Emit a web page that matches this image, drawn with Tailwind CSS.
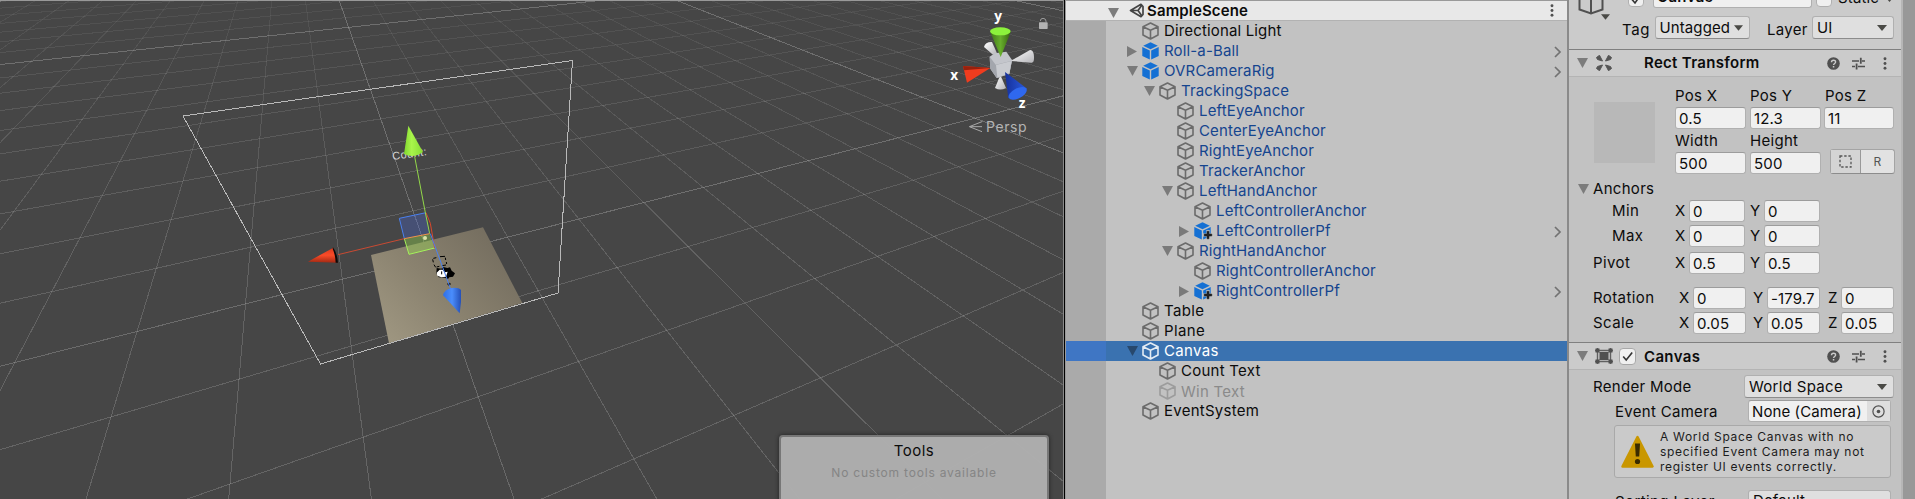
<!DOCTYPE html>
<html lang="en">
<head>
<meta charset="utf-8">
<title>Scene editor</title>
<script src="https://cdn.jsdelivr.net/npm/@tailwindcss/browser@4"></script>
</head>
<body class="w-[1915px] h-[499px] overflow-hidden bg-[#c2c2c2] font-[Inter,sans-serif] text-[15px] leading-5 tracking-[0.15px] text-[#0c0c0c]">
<svg class="hidden">
  <defs>
    <symbol id="cube" viewBox="0 0 17 18"><path d="M8.5 1 16 4.8v8.2L8.5 17 1 13V4.800zM1 4.800 8.500 8.300 16 4.800M8.500 8.300V17" fill="none" stroke="currentColor" stroke-width="1.6" stroke-linejoin="round"/></symbol>
    <symbol id="prefab" viewBox="0 0 17 18"><path d="M8.500 .3 15.800 3.700 8.500 7.300 1.200 3.700zM.3 5 7.800 8.600v9L.3 13.900zM16.700 5 9.200 8.600v9l7.500-3.700z" fill="#1470d4"/></symbol>
    <symbol id="plus" viewBox="0 0 10 10"><path d="M3.400 0h3.200v3.400H10v3.200H6.600V10H3.400V6.600H0V3.400h3.400z" fill="#c2c2c2"/><path d="M4 1.200h2V4h2.800v2H6v2.800H4V6H1.200V4H4z" fill="#222" stroke="#222" stroke-width=".5"/></symbol>
    <symbol id="down" viewBox="0 0 11 10"><path d="M0 0h11L5.500 10z" fill="currentColor"/></symbol>
    <symbol id="right" viewBox="0 0 10 11"><path d="M0 0v11l10-5.500z" fill="currentColor"/></symbol>
    <symbol id="chev" viewBox="0 0 8 12"><path d="M1 1l5 5-5 5" fill="none" stroke="#727272" stroke-width="1.700"/></symbol>
    <symbol id="caret" viewBox="0 0 10 6"><path d="M0 0h10L5 6z" fill="#4a4a46"/></symbol>
    <symbol id="dots" viewBox="0 0 4 13"><g fill="#505050"><circle cx="2" cy="1.700" r="1.450"/><circle cx="2" cy="6.500" r="1.450"/><circle cx="2" cy="11.300" r="1.450"/></g></symbol>
    <symbol id="help" viewBox="0 0 13 13"><circle cx="6.500" cy="6.500" r="6.300" fill="#505050"/><path d="M4.500 5.200c0-2.700 4.100-2.600 4.100-.2 0 1.500-2 1.500-2 3" fill="none" stroke="#cbcbcb" stroke-width="1.400"/><rect x="5.800" y="9" width="1.500" height="1.500" fill="#cbcbcb"/></symbol>
    <symbol id="sliders" viewBox="0 0 13 13"><path d="M0 4h7M10 4h3M0 9.500h3M6 9.500h7" stroke="#505050" stroke-width="1.600"/><path d="M8.800 .8v6M4.600 6.500v6" stroke="#505050" stroke-width="1.800"/></symbol>
  </defs>
</svg>

<div class="flex h-[499px]">

  <!-- Scene view -->
  <section class="relative w-[1063px] h-full shrink-0 bg-[#464646] overflow-hidden border-t border-[#999]">
    <svg class="block -mt-px" width="1063" height="499" viewBox="0 0 1063 499">
      <defs>
        <linearGradient id="fade" x1="0" y1="0" x2="0" y2="499" gradientUnits="userSpaceOnUse">
          <stop offset="0" stop-color="#fff" stop-opacity=".05"/><stop offset=".2" stop-color="#fff" stop-opacity=".1"/><stop offset=".5" stop-color="#fff" stop-opacity=".15"/><stop offset="1" stop-color="#fff" stop-opacity=".17"/>
        </linearGradient>
        <linearGradient id="fadeMajor" x1="0" y1="0" x2="0" y2="499" gradientUnits="userSpaceOnUse">
          <stop offset="0" stop-color="#fff" stop-opacity=".22"/><stop offset=".4" stop-color="#fff" stop-opacity=".22"/><stop offset="1" stop-color="#fff" stop-opacity=".18"/>
        </linearGradient>
        <linearGradient id="slab" x1="0" y1="1" x2="1" y2=".3"><stop offset="0" stop-color="#a29a84"/><stop offset=".5" stop-color="#8a826f"/><stop offset="1" stop-color="#746d5f"/></linearGradient>
        <linearGradient id="gUp"><stop offset="0" stop-color="#7fd62e"/><stop offset=".4" stop-color="#a9f54b"/><stop offset="1" stop-color="#86dc33"/></linearGradient>
        <linearGradient id="gRed" x1="0" y1="0" x2="0" y2="1"><stop offset="0" stop-color="#d63a1e"/><stop offset=".5" stop-color="#fa4b28"/><stop offset="1" stop-color="#a22a14"/></linearGradient>
        <linearGradient id="gBlue"><stop offset="0" stop-color="#2f6fe6"/><stop offset=".5" stop-color="#4a8dfc"/><stop offset="1" stop-color="#2550b8"/></linearGradient>
        <linearGradient id="gGreen"><stop offset="0" stop-color="#3f7518"/><stop offset=".5" stop-color="#67ad2c"/><stop offset="1" stop-color="#35630f"/></linearGradient>
        <linearGradient id="gNavy"><stop offset="0" stop-color="#16309a"/><stop offset="1" stop-color="#2a5be0"/></linearGradient>
        <linearGradient id="gWhite" x1="0" y1="0" x2="1" y2="1"><stop offset="0" stop-color="#fff"/><stop offset="1" stop-color="#b4b4b8"/></linearGradient>
      </defs>
      <g id="grid" shape-rendering="crispEdges" fill="none"></g>

      <!-- Slab, canvas outline and transform handles -->
      <svg x="290" y="110" width="260" height="240" viewBox="0 0 780 720">
        <path d="M243 435 579 352 697 579 297 700z" fill="url(#slab)"/>
      </svg>
      <path d="M183 116 572.500 60.500 558 293 320.500 364z" fill="none" stroke="#b9b9b9" shape-rendering="crispEdges"/>
      <svg x="290" y="110" width="260" height="240" viewBox="0 0 780 720">
        <text x="308" y="150" transform="rotate(-8 308 149)" font-family="Liberation Sans" font-size="33" letter-spacing="0" textLength="104" fill="#d4d4d4">Count:</text>
        <path d="M328 325 408 308 419 371 343 386z" fill="#4668d8" fill-opacity=".32"/>
        <path d="M343 386 419 371 434 414 357 433z" fill="#9be04e" fill-opacity=".38"/>
        <path d="M343 386 328 325 408 308" fill="none" stroke="#4a80f0" stroke-width="3"/>
        <path d="M343 386 357 433 434 414" fill="none" stroke="#a4f25a" stroke-width="3"/>
        <path d="M408 308 421 340 434 414" fill="none" stroke="#d8482c" stroke-width="3"/>
        <path d="M374 140 406 308 419 371" fill="none" stroke="#93d84a" stroke-width="3"/>
        <path d="M144 434 343 386" stroke="#c94a32" stroke-width="3"/><path d="M343 386 419 371" stroke="#f0924c" stroke-width="3"/>
        <circle cx="405" cy="384" r="6" fill="#dce4a8"/>
        <path d="M430 445l9-2m11-3 15-1M428 448l2 9M432 464l5 8M466 443l1 7M469 456l1 6M440 471l8-2M456 467l12-2" fill="none" stroke="#000" stroke-width="3"/>
        <path d="M440 474l14 2 6-5 12 3 8-2 5 10 10 8-6 10-11 2-4 5-10-4-18-1-7-12z" fill="#000"/>
        <path d="M440 488l9-9h9l6 8 9-2-5 15-14 2-12-5z" fill="#fff"/><path d="M455 484v9" stroke="#000" stroke-width="3"/>
        <path d="M472 522h10M477 518v9" stroke="#111" stroke-width="4"/>
        <path d="M421 371 483 540" stroke="#4a80f0" stroke-width="3"/>
        <path d="M355 47 399 126Q372 146 342 132z" fill="url(#gUp)"/>
        <path d="M54 455 130 413 143 458z" fill="url(#gRed)"/><path d="M129 412q13 18 15 46h-7q-1-24-9-42z" fill="#0a0a0a"/>
        <path d="M459 556q4-18 27-22 20-2 27 6v36l-4 34z" fill="url(#gBlue)"/>
      </svg>

      <!-- Orientation gizmo -->
      <svg x="920" y="0" width="160" height="150" viewBox="0 0 480 450" font-family="Open Sans" fill="#fff">
        <path d="M192 141q4-16 24-15l16 36-13 2z" fill="url(#gWhite)"/>
        <path d="M241 225 225 264q16 9 33 0z" fill="url(#gWhite)"/>
        <path d="M209 170 224 160 259 155 276 180 268 222 230 234 211 206z" fill="#c3c5cb"/>
        <path d="M209 170 227 194 276 182 268 222 230 234 211 206z" fill="#a3a6ad"/><path d="M228 195 275 183 268 220 232 233z" fill="#c9cbd0"/>
        <path d="M272 183 330 150q11-1 12 20t-9 18z" fill="url(#gWhite)"/>
        <path d="M211 204 129 198 141 248z" fill="#f03c1e"/><path d="M211 204 129 198 132 211z" fill="#98200c"/>
        <path d="M210 94h63L242 171z" fill="url(#gGreen)"/><ellipse cx="241" cy="94" rx="31" ry="12" fill="#8cf23c"/>
        <path d="M255 216 321 266 265 295z" fill="url(#gNavy)"/><ellipse cx="293" cy="280" rx="30" ry="15" transform="rotate(-28 293 280)" fill="#2f68ee"/>
        <text x="223" y="62" font-size="41" font-weight="700">y</text>
        <text x="91" y="240" font-size="41" font-weight="700">x</text>
        <text x="296" y="325" font-size="41" font-weight="700">z</text>
        <path d="M186 365 148 380 186 395M150 380h36" fill="none" stroke="#a8a8a8" stroke-width="3"/>
        <text x="198" y="396" font-family="Inter" font-size="42" textLength="122" fill="#b4b4b4">Persp</text>
        <rect x="357" y="67" width="26" height="20" rx="2" fill="#b2b2b2"/><path d="M361 63q0-8 8-8t9 8v5" fill="none" stroke="#999" stroke-width="3"/>
      </svg>
    </svg>
    <div class="absolute left-[779px] top-[434px] w-[270px] h-[70px] rounded-t-sm border-2 border-[#777] bg-[#aeaeae]/98 text-center shadow-[0_0_4px_#222]">
      <div class="mt-[4px] text-[15px] tracking-[0.5px]">Tools</div>
      <div class="mt-[2px] text-[12px] tracking-[0.8px] text-[#858585]">No custom tools available</div>
    </div>
  </section>
  <div class="w-[3px] h-full shrink-0 bg-[#8a8a8a] border-x border-l-[#8a8a8a] border-r-[#999] bg-[linear-gradient(#000,#000)]"></div>

  <!-- Hierarchy -->
  <section class="w-[501px] h-full shrink-0 flex flex-col border-t border-[#999]">
    <header class="h-5 shrink-0 flex items-center bg-[#e8e8e8] border-b border-[#b2b2b2] pl-[42px] pr-[13px] font-semibold">
      <svg class="w-[11px] h-[10px] text-[#7c7c7c] mt-1"><use href="#down"/></svg>
      <svg class="w-[16px] h-[15px] ml-[10px]" viewBox="0 0 15 15"><path d="M1 7.500 11.500 1.300 13.500 3.500v8L11.500 13.700zM1 7.500h7.500M8.500 7.500 12.500 2M8.500 7.500 12.500 13" fill="none" stroke="#444" stroke-width="1.700" stroke-linejoin="round"/></svg>
      <span class="ml-[2px]">SampleScene</span>
      <svg class="w-1 h-[13px] ml-auto"><use href="#dots"/></svg>
    </header>
    <div class="flex-1 bg-[linear-gradient(to_right,#aaaaaa_40px,#c2c2c2_40px)] [&>div]:flex [&>div]:items-center [&>div]:h-5 [&>div]:pr-[5px] [&_i]:w-4 [&_i]:mr-[2px] [&_i]:shrink-0 [&_i]:flex [&_i]:justify-center [&_i]:text-[#7a7a7a] [&_b]:relative [&_b]:w-[17px] [&_b]:mr-[5px] [&_b]:text-[#6b6b6b] [&_.d]:w-[11px] [&_.d]:h-[10px] [&_.r]:w-[10px] [&_.r]:h-[11px] [&_.c]:w-[17px] [&_.c]:h-[18px] [&_.p]:absolute [&_.p]:w-[10px] [&_.p]:h-[10px] [&_.p]:left-[9px] [&_.p]:top-[8px] [&_.v]:w-2 [&_.v]:h-3 [&_.v]:ml-auto [&_.v]:mt-[1px]">
      <div class="pl-[58px]"><i></i><b><svg class="c"><use href="#cube"/></svg></b>Directional Light</div>
      <div class="pl-[58px] text-[#15458f]"><i><svg class="r"><use href="#right"/></svg></i><b><svg class="c"><use href="#prefab"/></svg></b>Roll-a-Ball<svg class="v"><use href="#chev"/></svg></div>
      <div class="pl-[58px] text-[#15458f]"><i><svg class="d"><use href="#down"/></svg></i><b><svg class="c"><use href="#prefab"/></svg></b>OVRCameraRig<svg class="v"><use href="#chev"/></svg></div>
      <div class="pl-[75px] text-[#15458f]"><i><svg class="d"><use href="#down"/></svg></i><b><svg class="c"><use href="#cube"/></svg></b>TrackingSpace</div>
      <div class="pl-[93px] text-[#15458f]"><i></i><b><svg class="c"><use href="#cube"/></svg></b>LeftEyeAnchor</div>
      <div class="pl-[93px] text-[#15458f]"><i></i><b><svg class="c"><use href="#cube"/></svg></b>CenterEyeAnchor</div>
      <div class="pl-[93px] text-[#15458f]"><i></i><b><svg class="c"><use href="#cube"/></svg></b>RightEyeAnchor</div>
      <div class="pl-[93px] text-[#15458f]"><i></i><b><svg class="c"><use href="#cube"/></svg></b>TrackerAnchor</div>
      <div class="pl-[93px] text-[#15458f]"><i><svg class="d"><use href="#down"/></svg></i><b><svg class="c"><use href="#cube"/></svg></b>LeftHandAnchor</div>
      <div class="pl-[110px] text-[#15458f]"><i></i><b><svg class="c"><use href="#cube"/></svg></b>LeftControllerAnchor</div>
      <div class="pl-[110px] text-[#15458f]"><i><svg class="r"><use href="#right"/></svg></i><b><svg class="c"><use href="#prefab"/></svg><svg class="p"><use href="#plus"/></svg></b>LeftControllerPf<svg class="v"><use href="#chev"/></svg></div>
      <div class="pl-[93px] text-[#15458f]"><i><svg class="d"><use href="#down"/></svg></i><b><svg class="c"><use href="#cube"/></svg></b>RightHandAnchor</div>
      <div class="pl-[110px] text-[#15458f]"><i></i><b><svg class="c"><use href="#cube"/></svg></b>RightControllerAnchor</div>
      <div class="pl-[110px] text-[#15458f]"><i><svg class="r"><use href="#right"/></svg></i><b><svg class="c"><use href="#prefab"/></svg><svg class="p"><use href="#plus"/></svg></b>RightControllerPf<svg class="v"><use href="#chev"/></svg></div>
      <div class="pl-[58px]"><i></i><b><svg class="c"><use href="#cube"/></svg></b><span class="tracking-[.35px]">Table</span></div>
      <div class="pl-[58px]"><i></i><b><svg class="c"><use href="#cube"/></svg></b><span class="tracking-[.35px]">Plane</span></div>
      <div class="pl-[58px] text-white bg-[linear-gradient(to_right,#3f76c4_40px,#3a72b0_40px)]"><i><svg class="d text-[#27486d]"><use href="#down"/></svg></i><b><svg class="c text-[#e4ecf4]"><use href="#cube"/></svg></b><span class="tracking-[.35px]">Canvas</span></div>
      <div class="pl-[75px]"><i></i><b><svg class="c"><use href="#cube"/></svg></b><span class="tracking-[.25px]">Count Text</span></div>
      <div class="pl-[75px] text-[#8a8a8a]"><i></i><b><svg class="c text-[#9c9c9c]"><use href="#cube"/></svg></b><span class="mt-px tracking-[.25px]">Win Text</span></div>
      <div class="pl-[58px]"><i></i><b><svg class="c"><use href="#cube"/></svg></b><span class="tracking-[.25px]">EventSystem</span></div>
    </div>
  </section>
  <div class="w-[2px] h-full shrink-0 bg-[#8a8a8a]"></div>

  <!-- Inspector -->
  <section class="w-[332px] h-full shrink-0 overflow-hidden flex flex-col [&_.f]:h-[22px] [&_.f]:rounded-[3px] [&_.f]:border [&_.f]:border-[#b0b0b0] [&_.f]:border-t-[#9c9c9c] [&_.f]:bg-[#f0f0f0] [&_.f]:pl-[3px] [&_.f]:leading-[22px] [&_.f]:whitespace-nowrap [&_.f]:shrink-0 [&_.m]:h-[23px] [&_.m]:rounded-[3px] [&_.m]:border [&_.m]:border-[#b0b0b0] [&_.m]:border-b-[#8c8c8c] [&_.m]:bg-[#dfdfdf] [&_.m]:pl-1 [&_.m]:pr-[6px] [&_.m]:flex [&_.m]:items-center [&_.m]:justify-between [&_.m]:shrink-0">
    <div class="h-[49px] shrink-0 bg-[#cbcbcb] flex flex-col">
      <div class="h-4 flex items-start shrink-0">
        <svg class="w-[26px] h-[14px] ml-[9px] overflow-visible shrink-0" viewBox="0 0 26 14"><path d="M1.500-5v14.500l11.500 4 11.500-4V-5M13-1v14M1.500-5 13-1 24.500-5" fill="none" stroke="#505050" stroke-width="2"/></svg>
        <svg class="w-[9px] h-[6px] mt-[14px] -ml-[3px] shrink-0"><use href="#caret"/></svg>
        <div class="ml-[18px] -mt-[9px] w-4 h-4 rounded-sm border border-[#b0b0b0] bg-[#f0f0f0] shrink-0"><svg viewBox="0 0 14 14" class="w-[14px] h-[14px]"><path d="M3 7.500 6 11l5.500-8" fill="none" stroke="#333" stroke-width="1.600"/></svg></div>
        <div class="f ml-[9px] -mt-[14px] w-[159px] font-semibold"><div class="-mt-px tracking-[.35px]">Canvas</div></div>
        <div class="ml-[4px] -mt-[9px] w-4 h-4 rounded-sm border border-[#b0b0b0] bg-[#f0f0f0] shrink-0"></div>
        <div class="ml-[6px] -mt-[12px] w-[49px]">Static</div>
        <svg class="w-[5px] h-[3px] -mt-px shrink-0"><use href="#caret"/></svg>
      </div>
      <div class="flex items-center h-[23px]">
        <span class="ml-[53px] w-[32.500px] tracking-[.6px] mt-1 shrink-0">Tag</span>
        <div class="m w-[95.500px]"><span class="tracking-[.1px]">Untagged</span><svg class="w-[9px] h-[6px] shrink-0"><use href="#caret"/></svg></div>
        <span class="ml-[17px] w-[45px] tracking-[.3px] mt-1 shrink-0">Layer</span>
        <div class="m w-[82px]">UI<svg class="w-[10px] h-[6px]"><use href="#caret"/></svg></div>
      </div>
    </div>
    <div class="h-[28px] shrink-0 bg-[#cbcbcb] border-t border-t-[#808080] border-b border-b-[#b4b4b4] flex items-center pl-2 pr-[14px] font-semibold">
      <svg class="w-[11px] h-[10px] text-[#7c7c7c]"><use href="#down"/></svg>
      <svg class="w-4 h-4 ml-2" viewBox="0 0 16 16"><path d="M.5 2.500l3-2.200L6.500 6 1.500 4.500zM15.500 2.500l-3-2.200L9.500 6l5-1.500zM.5 13.500l3 2.200L6.500 10l-5 1.500zM15.500 13.500l-3 2.200L9.500 10l5 1.500z" fill="#555" stroke="#555"/></svg>
      <span class="ml-[32px] tracking-[.3px]">Rect Transform</span>
      <svg class="w-[13px] h-[13px] ml-auto"><use href="#help"/></svg><svg class="w-[13px] h-[13px] ml-[12px]"><use href="#sliders"/></svg><svg class="w-1 h-[13px] ml-[18px]"><use href="#dots"/></svg>
    </div>
    <div class="h-[102px] shrink-0 flex">
      <div class="mt-[25px] ml-[25px] w-[61px] h-[61px] bg-[#b8b8b8] shrink-0"></div>
      <div class="ml-[20px] mt-[9px] flex flex-col">
        <div class="flex gap-[4px] h-[21px] tracking-[.3px] [&>span]:w-[71px]"><span>Pos X</span><span>Pos Y</span><span>Pos Z</span></div>
        <div class="flex gap-[4px]"><div class="f w-[71px]">0.5</div><div class="f w-[71px]">12.3</div><div class="f w-[70px] -ml-px">11</div></div>
        <div class="flex gap-[4px] h-5 mt-[3px] tracking-[.3px] [&>span]:w-[71px]"><span class="-mt-px">Width</span><span class="-mt-px">Height</span></div>
        <div class="flex gap-[4px]"><div class="f w-[71px]">500</div><div class="f w-[71px]">500</div>
          <div class="ml-[5px] -mt-[3px] w-[65px] h-[25px] flex items-center border border-[#a4a4a4] border-b-[#8c8c8c] rounded-[3px] bg-[#e2e2e2] shrink-0">
            <span class="w-[30px] h-full bg-[#d4d4d4] border-r border-[#999] flex items-center justify-center"><svg class="w-[13px] h-[13px]"><rect x="1" y="1" width="11" height="11" fill="none" stroke="#555" stroke-width="1.300" stroke-dasharray="2.400 1.800"/></svg></span>
            <span class="flex-1 text-center text-[12px] text-[#555]">R</span>
          </div>
        </div>
      </div>
    </div>
    <div class="h-5 shrink-0 flex items-center pl-[9px]"><svg class="w-[11px] h-[10px] text-[#7c7c7c]"><use href="#down"/></svg><span class="ml-[4px] tracking-[.3px]">Anchors</span></div>
    <div class="h-[24px] shrink-0 flex items-center pl-[43px]"><span class="w-[63px] tracking-[.4px]">Min</span><span class="w-[14px]">X</span><div class="f w-[56px]">0</div><span class="w-[14px] ml-[5px]">Y</span><div class="f w-[56px]">0</div></div>
    <div class="h-[25px] shrink-0 flex items-center pl-[43px]"><span class="w-[63px] tracking-[.4px]">Max</span><span class="w-[14px]">X</span><div class="f w-[56px]">0</div><span class="w-[14px] ml-[5px]">Y</span><div class="f w-[56px]">0</div></div>
    <div class="h-[25px] mt-[2px] shrink-0 flex items-center pl-[24px]"><span class="w-[82px] tracking-[.4px]">Pivot</span><span class="w-[14px]">X</span><div class="f w-[56px]">0.5</div><span class="w-[14px] ml-[5px]">Y</span><div class="f w-[56px]">0.5</div></div>
    <div class="h-[25px] mt-[10px] shrink-0 flex items-center pl-[24px]"><span class="w-[86px] tracking-[.4px]">Rotation</span><span class="w-[14px]">X</span><div class="f w-[53px]">0</div><span class="w-[14px] ml-[7px]">Y</span><div class="f w-[53px]">-179.7</div><span class="w-[13px] ml-[8px]">Z</span><div class="f w-[53px]">0</div></div>
    <div class="h-[25px] shrink-0 flex items-center pl-[24px]"><span class="w-[86px] tracking-[.4px]">Scale</span><span class="w-[14px]">X</span><div class="f w-[53px]">0.05</div><span class="w-[14px] ml-[7px]">Y</span><div class="f w-[53px]">0.05</div><span class="w-[13px] ml-[8px]">Z</span><div class="f w-[53px]">0.05</div></div>
    <div class="h-[28px] mt-[7px] shrink-0 bg-[#cbcbcb] border-t border-t-[#808080] border-b border-b-[#b4b4b4] flex items-center pl-2 pr-[14px] font-semibold">
      <svg class="w-[11px] h-[10px] text-[#7c7c7c]"><use href="#down"/></svg>
      <svg class="w-[18px] h-4 ml-[7px]" viewBox="0 0 18 16"><path d="M2.500 0v16M15.500 0v16M0 2.500h18M0 13.500h18" stroke="#606060" stroke-width="1.400"/><path d="M.5.500h4v4h-4zM13.500.500h4v4h-4zM.5 11.500h4v4h-4zM13.500 11.500h4v4h-4zM4.500 4h9v8h-9z" fill="#505050"/></svg>
      <div class="ml-[6px] w-[17px] h-[17px] rounded-sm border border-[#a8a8a8] bg-[#f0f0f0]"><svg viewBox="0 0 15 15" class="w-[15px] h-[15px]"><path d="M3.200 7.500 6.200 11l6-7.500" fill="none" stroke="#333" stroke-width="1.600"/></svg></div>
      <span class="ml-[8px] mt-px tracking-[.35px]">Canvas</span>
      <svg class="w-[13px] h-[13px] ml-auto"><use href="#help"/></svg><svg class="w-[13px] h-[13px] ml-[12px]"><use href="#sliders"/></svg><svg class="w-1 h-[13px] ml-[18px]"><use href="#dots"/></svg>
    </div>
    <div class="h-[23px] mt-[5px] shrink-0 flex items-center pl-[24px]"><span class="w-[151px] tracking-[.3px]">Render Mode</span><div class="m w-[150px]"><span class="tracking-[.3px]">World Space</span><svg class="w-[10px] h-[6px]"><use href="#caret"/></svg></div></div>
    <div class="h-[22px] mt-[2px] shrink-0 flex items-center pl-[46px]"><span class="w-[133px] mt-px tracking-[.3px]">Event Camera</span><div class="f w-[143px] flex justify-between"><span class="tracking-[.1px]">None (Camera)</span><span class="w-[23px] h-full bg-[#dedede] flex items-center justify-center"><svg class="w-[13px] h-[13px]"><circle cx="6.500" cy="6.500" r="5.600" fill="none" stroke="#505050" stroke-width="1.200"/><circle cx="6.500" cy="6.500" r="1.800" fill="#505050"/></svg></span></div></div>
    <div class="ml-[45px] mt-[3px] w-[277px] h-[53px] shrink-0 rounded-[3px] border border-[#a9a9a9] bg-[#cacaca] flex items-center pl-[6px] text-[12px] leading-[15px] tracking-[.7px] text-[#1c1c1c]">
      <svg class="w-[33px] h-[33px] shrink-0" viewBox="0 0 33 33"><path d="M16.500 2 31.500 31.500h-30z" fill="#c99700" stroke="#c99700" stroke-width="2.500" stroke-linejoin="round"/><path d="M14 8.500h5l-.8 13h-3.400z" fill="#3a2c00"/><circle cx="16.500" cy="26.500" r="2.600" fill="#3a2c00"/></svg>
      <p class="ml-[6px] whitespace-nowrap">A World Space Canvas with no<br>specified Event Camera may not<br>register UI events correctly.</p>
    </div>
    <div class="mt-[12px] shrink-0 flex items-start pl-[46px]"><span class="w-[133px] mt-[2px] tracking-[.4px]">Sorting Layer</span><div class="m w-[143px]"><span class="-mt-px">Default</span></div></div>
  </section>
  <div class="w-[2px] h-full shrink-0 bg-[#b6b6b6]"></div>
  <div class="flex-1 bg-[#989898]"></div>
</div>

<script>
  // Ground grid: two families of lines, each through its vanishing point on the horizon.
  const grid = document.getElementById('grid');
  function line(vx, x, major) {
    const p = document.createElementNS('http://www.w3.org/2000/svg', 'path');
    p.setAttribute('d', `M${vx} -154L${x} 499L${vx + (x - vx) * 2} 1152`);
    p.setAttribute('stroke', major ? 'url(#fadeMajor)' : 'url(#fade)');
    grid.appendChild(p);
  }
  for (let k = -9; k < 30; k++) line(285, 86 + 142.7 * k, (k + 7) % 10 === 0);
  for (let j = -22; j < 6; j++) line(2045, -167 + 354.3 * j, (j + 31) % 10 === 0);
</script>
</body>
</html>
